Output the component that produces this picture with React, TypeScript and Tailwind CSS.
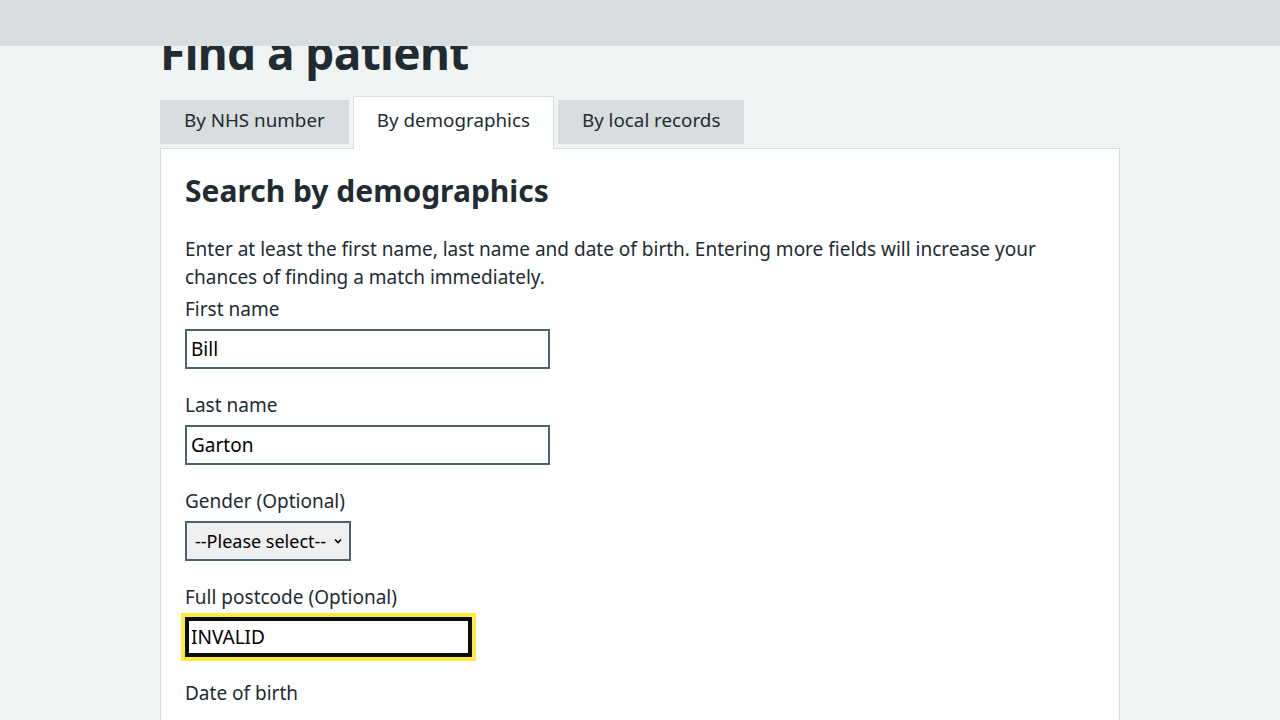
import React from "react";

const font = { fontFamily: '"Noto Sans", "Open Sans", sans-serif' };

function Field({ label, children }: { label: string; children: React.ReactNode }) {
  return (
    <div className="mb-[22px]">
      <div className="text-[19px] leading-[28px] text-[#212b32] mb-[6px]">{label}</div>
      {children}
    </div>
  );
}

export default function App() {
  return (
    <div className="min-h-[720px] bg-[#f0f4f5] relative overflow-hidden" style={font}>
      <div className="absolute top-0 left-0 right-0 h-[46px] bg-[#d8dde0] z-10" />
      <div className="w-[960px] mx-auto pt-[24px]">
        <h1 className="text-[46px] leading-[56px] font-bold text-[#212b32] mb-[16px] tracking-[-0.6px]">Find a patient</h1>
        <div className="flex items-end gap-[4px] h-[53px] relative z-[1]">
          <div className="h-[44px] mb-[5px] bg-[#d8dde0] px-[24px] pb-[3px] flex items-center text-[18.8px] text-[#212b32]">By NHS number</div>
          <div className="h-[53px] bg-white border border-[#d8dde0] border-b-0 px-[23px] pb-[5px] flex items-center text-[18.8px] text-[#212b32]">By demographics</div>
          <div className="h-[44px] mb-[5px] bg-[#d8dde0] px-[24px] pb-[3px] flex items-center text-[18.8px] text-[#212b32]">By local records</div>
        </div>
        <div className="bg-white border border-[#d8dde0] -mt-[1px] px-[24px] pt-[20px] pb-[40px] min-h-[600px]">
          <h2 className="text-[30px] leading-[44px] font-bold text-[#212b32] mb-[22px]">Search by demographics</h2>
          <p className="text-[19px] leading-[28px] text-[#212b32] mb-[4px] pr-[40px]">
            Enter at least the first name, last name and date of birth. Entering more fields will increase your chances of finding a match immediately.
          </p>
          <Field label="First name">
            <input
              defaultValue="Bill"
              className="block w-[365px] h-[40px] border-2 border-[#4c6272] px-[4px] text-[19px] text-black outline-none"
            />
          </Field>
          <Field label="Last name">
            <input
              defaultValue="Garton"
              className="block w-[365px] h-[40px] border-2 border-[#4c6272] px-[4px] text-[19px] text-black outline-none"
            />
          </Field>
          <Field label="Gender (Optional)">
            <div className="w-[166px] h-[40px] border-2 border-[#4c6272] bg-[#efefef] flex items-center pl-[8px] pr-[6px] text-[18px] text-black">
              <span className="flex-1 whitespace-nowrap">--Please select--</span>
              <svg width="10" height="8" viewBox="0 0 10 8"><path d="M2 2.5 L5 5.5 L8 2.5" fill="none" stroke="black" strokeWidth="1.6" /></svg>
            </div>
          </Field>
          <Field label="Full postcode (Optional)">
            <input
              defaultValue="INVALID"
              className="block w-[287px] h-[40px] border-[4px] border-[#0b0c0c] bg-white px-[2px] text-[19px] text-black outline-none shadow-[0_0_0_4px_#ffeb3b]"
            />
          </Field>
          <div className="text-[19px] leading-[28px] text-[#212b32]">Date of birth</div>
        </div>
      </div>
    </div>
  );
}
